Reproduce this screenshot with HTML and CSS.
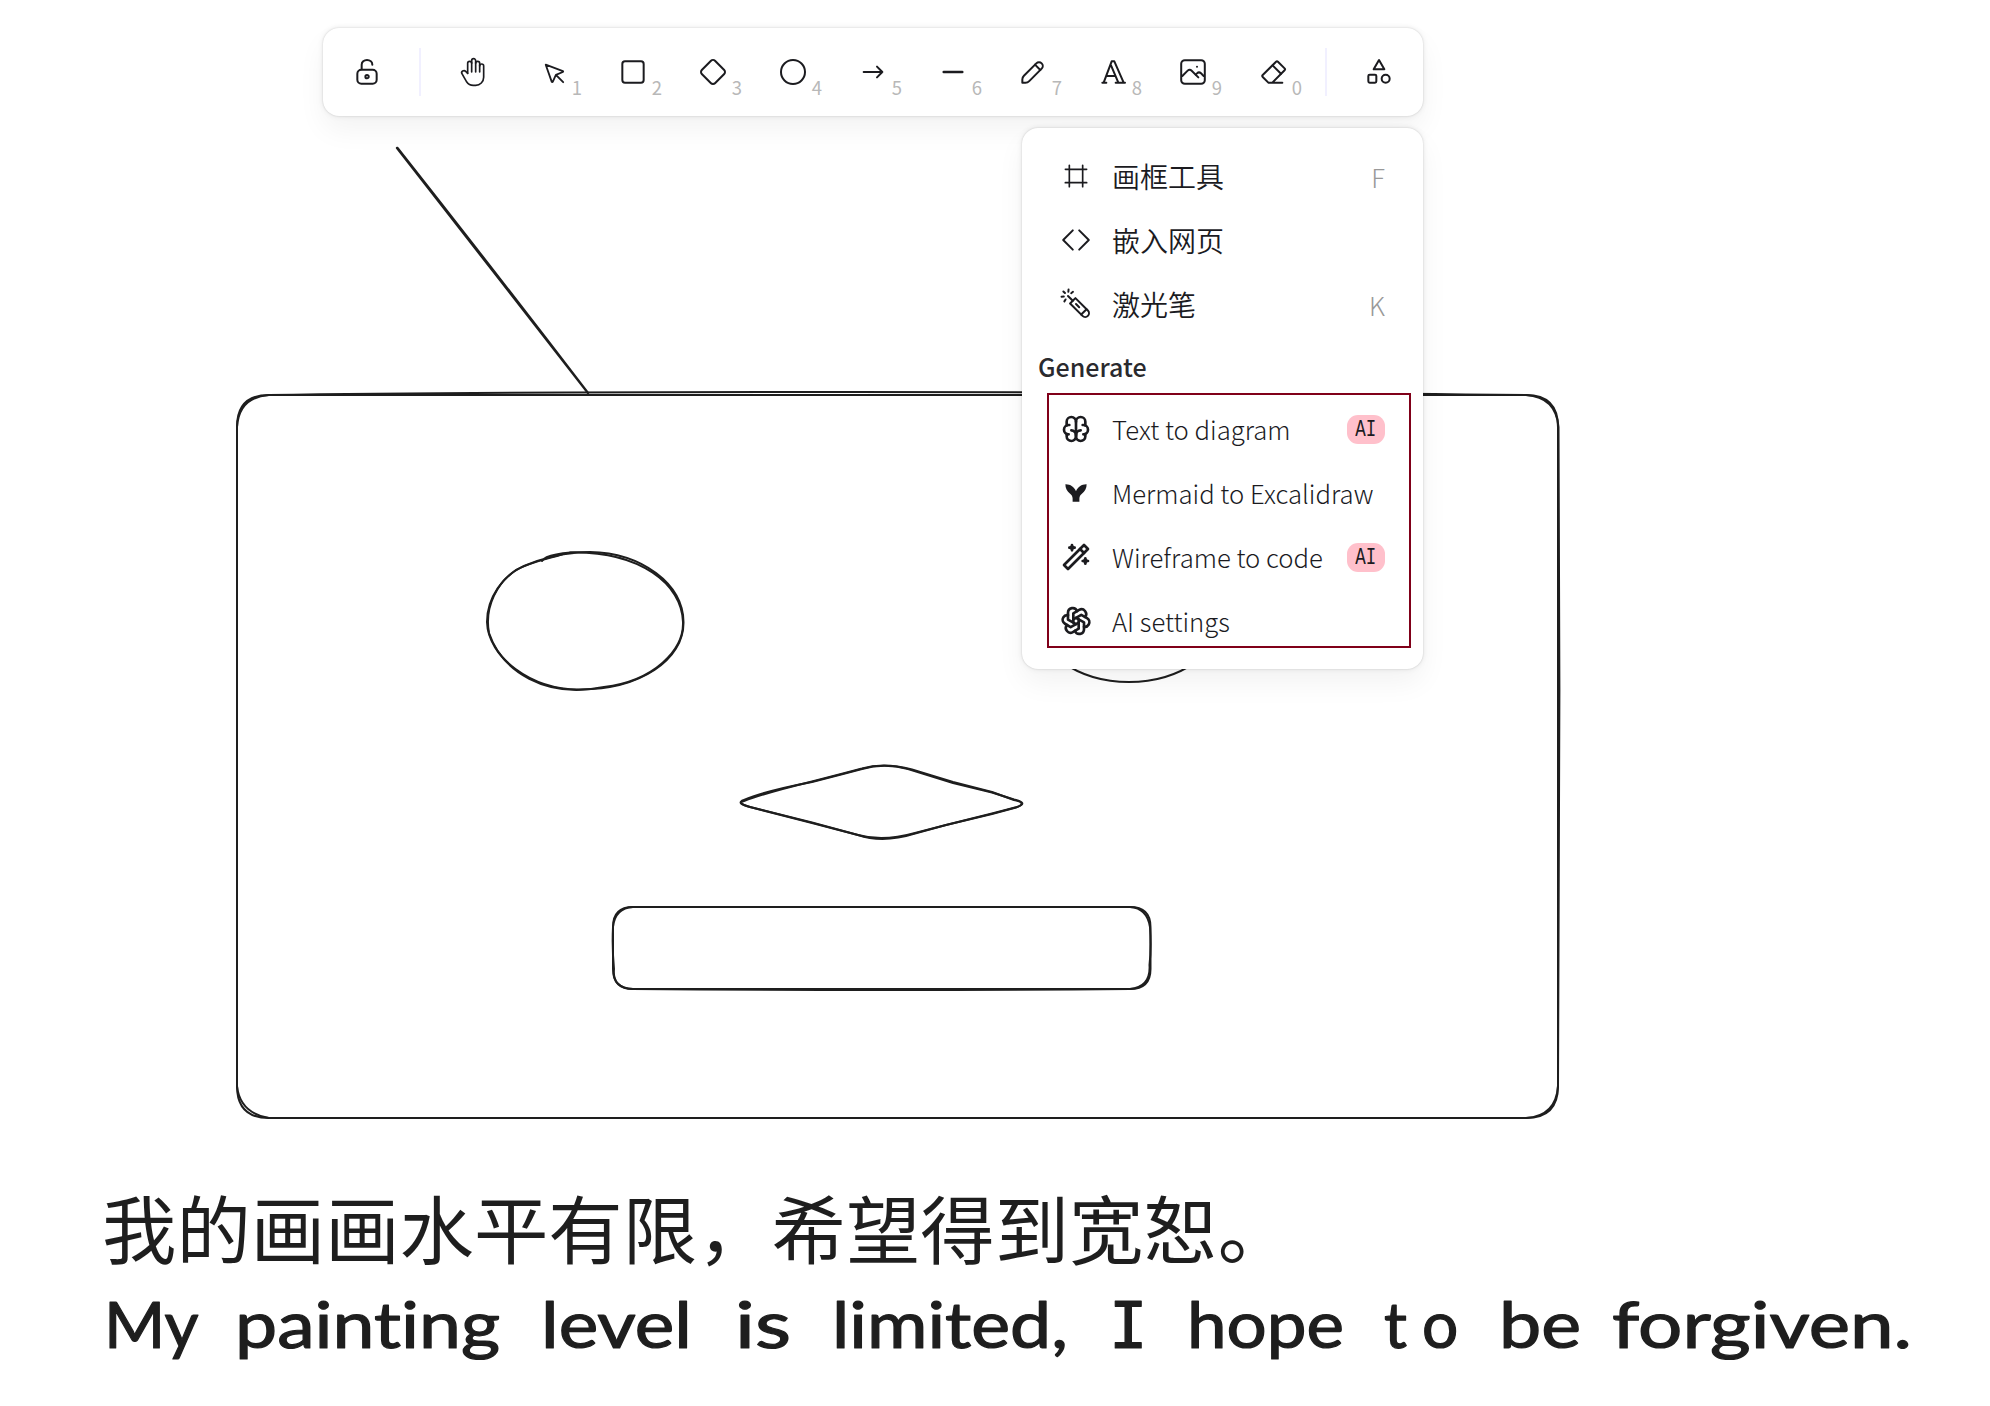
FILE: index.html
```html
<!DOCTYPE html>
<html lang="zh-CN">
<head>
<meta charset="utf-8">
<title>Excalidraw</title>
<link rel="stylesheet" href="styles.css">
</head>
<body>
<main class="board">
  <svg class="canvas" viewBox="0 0 1990 1406" aria-label="canvas">
    <g class="sketch">
      <path class="antenna" d="M397 148Q491 268 588 393M397.500 148Q493 269 588 393"/>
      <path d="M269 395H1526Q1558 395 1558 427V1086Q1558 1118 1526 1118H269Q237 1118 237 1086V427Q237 395 269 395"/>
      <path d="M269 395C520 391 1150 391 1526 395Q1556 397 1558.500 427C1560 640 1559.500 900 1558 1086Q1556 1116 1526 1118H269Q240 1113 237 1086V427Q239 397 269 395"/>
      <path d="M542 561C546 554 568 552 590 552C642 553 683 584 683.500 622C684 660 640 689.500 580 689.500C531 690 488 657 487 622C487 598 503 575 524 566C540 559 562 554 578 552.500"/>
      <path d="M570 552.500C640 551 682 584 683 622C684 650 654 681 604 687C545 699 502 671 489 633C484 606 498 582 516 570C530 562 548 559 563 554"/>
      <path d="M1034 613C1034 574 1077 544 1129 544S1224 574 1224 613S1180 682 1129 682S1034 652 1034 613Z"/>
      <path d="M744 800Q765 791 812 782L843 774L862 769Q884 762.500 908 769L953 783L992 792.500L1014 799.500Q1029 803 1017 807L992 813.500L946 825L915 833.500Q883 843.500 858 835L812 823L750 807Q735 803 744 800"/>
      <path d="M744 801Q765 793 812 781.500L843 773.500L862 768.500Q884 762 912 769.500L953 782L992 792L1014 800Q1028 803 1016 807.500L992 814L946 825L915 833Q883 842 858 835L812 822.500L750 807Q736 803 744 801"/>
      <path d="M633 907H1130Q1150.500 907 1150.500 927V969Q1150.500 989 1130 989H633Q613 989 613 969V927Q613 907 633 907"/>
      <path d="M633 907H1130Q1147 908 1150 927Q1151.500 948 1149.500 965Q1151 987 1130 989Q883 991 633 989Q612 988 614 969Q612 948 613 927Q615 908 633 907"/>
    </g>
    <text class="note note-zh" x="102" y="1258">我的画画水平有限，希望得到宽恕。</text>
    <text class="note note-en" y="1348"><tspan x="104" textLength="93" lengthAdjust="spacingAndGlyphs">My</tspan> <tspan x="235" textLength="265" lengthAdjust="spacingAndGlyphs">painting</tspan> <tspan x="541" textLength="151" lengthAdjust="spacingAndGlyphs">level</tspan> <tspan x="735" textLength="56" lengthAdjust="spacingAndGlyphs">is</tspan> <tspan x="832" textLength="236" lengthAdjust="spacingAndGlyphs">limited,</tspan> <tspan class="slab" x="1109">I</tspan> <tspan x="1187" textLength="157" lengthAdjust="spacingAndGlyphs">hope</tspan> <tspan x="1384 1422">to</tspan> <tspan x="1499" textLength="82" lengthAdjust="spacingAndGlyphs">be</tspan> <tspan x="1612" textLength="300" lengthAdjust="spacingAndGlyphs">forgiven.</tspan></text>
  </svg>

  <nav class="toolbar">
    <button class="tool"><svg class="icon thin" viewBox="0 0 20 20"><path d="M13.542 8.542H6.458a2.500 2.500 0 0 0-2.500 2.500v3.750a2.500 2.500 0 0 0 2.500 2.500h7.084a2.500 2.500 0 0 0 2.500-2.500v-3.750a2.500 2.500 0 0 0-2.500-2.500Z"/><path d="M10 13.958a1.042 1.042 0 1 0 0-2.083 1.042 1.042 0 0 0 0 2.083Z"/><path d="M6.667 8.333V5.417C6.667 3.806 8.159 2.500 10 2.500c1.841 0 3.333 1.306 3.333 2.917"/></svg></button>
    <span class="divider"></span>
    <button class="tool"><svg class="icon thin" viewBox="0 0 24 24"><path d="M8 13v-7.500a1.500 1.500 0 0 1 3 0v6.500"/><path d="M11 5.500v-2a1.500 1.500 0 1 1 3 0v8.500"/><path d="M14 5.500a1.500 1.500 0 0 1 3 0v6.500"/><path d="M17 7.500a1.500 1.500 0 0 1 3 0v8.500a6 6 0 0 1 -6 6h-2h.208a6 6 0 0 1 -5.012 -2.700a69.740 69.740 0 0 1 -.196 -.300c-.312 -.479 -1.407 -2.388 -3.286 -5.728a1.500 1.500 0 0 1 .536 -2.022a1.867 1.867 0 0 1 2.280 .280l1.470 1.470"/></svg></button>
    <button class="tool"><svg class="icon thin" viewBox="0 0 22 22"><path d="M6 6l4.153 11.793a.365 .365 0 0 0 .331 .207a.366 .366 0 0 0 .332 -.207l2.184 -4.793l4.787 -1.994a.355 .355 0 0 0 .213 -.323a.355 .355 0 0 0 -.213 -.323l-11.787 -4.360z"/><path d="M13.500 13.500l4.500 4.500"/></svg><span class="key">1</span></button>
    <button class="tool"><svg class="icon" viewBox="0 0 24 24"><rect x="4" y="4" width="16" height="16" rx="2"/></svg><span class="key">2</span></button>
    <button class="tool"><svg class="icon" viewBox="0 0 24 24"><path d="M10.500 20.400l-6.900 -6.900c-.781 -.781 -.781 -2.219 0 -3l6.900 -6.900c.781 -.781 2.219 -.781 3 0l6.900 6.900c.781 .781 .781 2.219 0 3l-6.900 6.900c-.781 .781 -2.219 .781 -3 0z"/></svg><span class="key">3</span></button>
    <button class="tool"><svg class="icon" viewBox="0 0 24 24"><circle cx="12" cy="12" r="9"/></svg><span class="key">4</span></button>
    <button class="tool"><svg class="icon" viewBox="0 0 24 24"><path d="M5 12h14M15 16l4-4M15 8l4 4"/></svg><span class="key">5</span></button>
    <button class="tool"><svg class="icon" viewBox="0 0 20 20"><path d="M4.167 10h11.666"/></svg><span class="key">6</span></button>
    <button class="tool"><svg class="icon thin" viewBox="0 0 20 20"><path d="m7.643 15.690 7.774-7.773a2.357 2.357 0 1 0-3.334-3.334L4.310 12.357a3.333 3.333 0 0 0-.977 2.357v1.953h1.953c.884 0 1.732-.352 2.357-.977Z"/><path d="m11.250 5.417 3.333 3.333"/></svg><span class="key">7</span></button>
    <button class="tool"><svg class="icon" viewBox="0 0 24 24"><path d="M4 20h3M14 20h7M6.900 15h6.900M10.200 6.300l5.800 13.700M5 20l6-16h2l7 16"/></svg><span class="key">8</span></button>
    <button class="tool"><svg class="icon thin" viewBox="0 0 20 20"><path d="M12.500 6.667h.01"/><path d="M4.910 2.625h10.180a2.284 2.284 0 0 1 2.285 2.284v10.182a2.284 2.284 0 0 1-2.284 2.284H4.909a2.284 2.284 0 0 1-2.284-2.284V4.909a2.284 2.284 0 0 1 2.284-2.284Z"/><path d="m3.333 12.500 3.334-3.333c.773-.745 1.726-.745 2.500 0l4.166 4.166"/><path d="m11.667 11.667.833-.834c.774-.744 1.726-.744 2.500 0l1.667 1.667"/></svg><span class="key">9</span></button>
    <button class="tool"><svg class="icon" viewBox="0 0 24 24"><path d="M19 20h-10.500l-4.210 -4.300a1 1 0 0 1 0 -1.410l10 -10a1 1 0 0 1 1.410 0l5 5a1 1 0 0 1 0 1.410l-9.200 9.300"/><path d="M18 13.300l-6.300 -6.300"/></svg><span class="key">0</span></button>
    <span class="divider"></span>
    <button class="tool"><svg class="icon" viewBox="0 0 24 24"><path d="M12 3l-4 7h8z"/><circle cx="17" cy="17" r="3"/><rect x="4" y="14" width="6" height="6" rx="1"/></svg></button>
  </nav>

  <section class="menu">
    <div class="item"><svg class="icon thin" viewBox="0 0 24 24"><path d="M4 7h16M4 17h16M7 4v16M17 4v16"/></svg><span class="label">画框工具</span><span class="shortcut">F</span></div>
    <div class="item"><svg class="icon thin" viewBox="0 0 20 20"><path d="M12 16l6-6-6-6M8 4l-6 6 6 6"/></svg><span class="label">嵌入网页</span></div>
    <div class="item"><svg class="icon thin" viewBox="0 0 20 20"><g transform="rotate(90 10 10)"><path d="m9.644 13.690 7.774-7.773a2.357 2.357 0 0 0-3.334-3.334l-7.773 7.774L8 12l1.643 1.690Z"/><path d="m13.250 3.417 3.333 3.333M10 10l2-2M5 15l3-3M2.156 17.894l1-1M5.453 19.029l-.144-1.407M2.377 11.887l.866 1.118M8.354 17.273l-1.194-.758M.953 14.652l1.408.130"/></g></svg><span class="label">激光笔</span><span class="shortcut">K</span></div>
    <h2 class="heading">Generate</h2>
    <div class="generate">
      <div class="item"><svg class="icon bold" viewBox="0 0 24 24"><path d="M15.500 13a3.500 3.500 0 0 0 -3.500 3.500v1a3.500 3.500 0 0 0 7 0v-1.800"/><path d="M8.500 13a3.500 3.500 0 0 1 3.500 3.500v1a3.500 3.500 0 0 1 -7 0v-1.800"/><path d="M17.500 16a3.500 3.500 0 0 0 0 -7h-.500"/><path d="M19 9.300v-2.800a3.500 3.500 0 0 0 -7 0"/><path d="M6.500 16a3.500 3.500 0 0 1 0 -7h.500"/><path d="M5 9.300v-2.800a3.500 3.500 0 0 1 7 0v10"/></svg><span class="label">Text to diagram</span><span class="badge"><span class="badge-text">AI</span></span></div>
      <div class="item"><svg class="icon solid" viewBox="0 0 490 490"><path d="M407.480,111.180C335.587,108.103 269.573,152.338 245.080,220C220.587,152.338 154.573,108.103 82.680,111.180C80.285,168.229 107.577,222.632 154.740,254.820C178.908,271.419 193.350,298.951 193.270,328.270L193.270,379.130L296.900,379.130L296.900,328.270C296.816,298.953 311.255,271.420 335.420,254.820C382.596,222.644 409.892,168.233 407.480,111.180Z"/></svg><span class="label">Mermaid to Excalidraw</span></div>
      <div class="item"><svg class="icon bold" viewBox="0 0 24 24"><path d="M6 21l15 -15l-3 -3l-15 15l3 3"/><path d="M15 6l3 3"/><path d="M9 3a2 2 0 0 0 2 2a2 2 0 0 0 -2 2a2 2 0 0 0 -2 -2a2 2 0 0 0 2 -2"/><path d="M19 13a2 2 0 0 0 2 2a2 2 0 0 0 -2 2a2 2 0 0 0 -2 -2a2 2 0 0 0 2 -2"/></svg><span class="label">Wireframe to code</span><span class="badge"><span class="badge-text">AI</span></span></div>
      <div class="item"><svg class="icon bold" viewBox="0 0 24 24"><path d="M11.217 19.384a3.501 3.501 0 0 0 6.783 -1.217v-5.167l-6 -3.350"/><path d="M5.214 15.014a3.501 3.501 0 0 0 4.446 5.266l4.340 -2.534v-6.946"/><path d="M6 7.630c-1.391 -.236 -2.787 .395 -3.534 1.689a3.474 3.474 0 0 0 1.271 4.745l4.263 2.514l6 -3.348"/><path d="M12.783 4.616a3.501 3.501 0 0 0 -6.783 1.217v5.067l6 3.450"/><path d="M18.786 8.986a3.501 3.501 0 0 0 -4.446 -5.266l-4.340 2.534v6.946"/><path d="M18 16.302c1.391 .236 2.787 -.395 3.534 -1.689a3.474 3.474 0 0 0 -1.271 -4.745l-4.308 -2.514l-5.955 3.420"/></svg><span class="label">AI settings</span></div>
    </div>
  </section>
</main>
</body>
</html>
```
FILE: styles.css
```css
* { box-sizing: border-box; }

body {
  margin: 0;
  background: #fff;
  color: #1b1b1f;
  font-family: "Noto Sans CJK SC", "Noto Sans", sans-serif;
}

.board {
  position: relative;
  height: 1406px;
  padding-top: 28px;
  overflow: hidden;
}

.canvas {
  position: absolute;
  inset: 0;
  width: 1990px;
  height: 1406px;
}

.sketch {
  fill: none;
  stroke: #1e1e1e;
  stroke-width: 2;
  stroke-linecap: round;
  stroke-linejoin: round;
}
.antenna { stroke-width: 2.3; }

.note { fill: #1e1e1e; }
.note-zh { font-size: 74.4px; font-weight: 400; }
.note-en {
  font-family: Lato, sans-serif;
  font-size: 64px;
  font-variant-ligatures: none;
  stroke: #1e1e1e;
  stroke-width: 1.2;
  stroke-linejoin: round;
}
.slab { font-family: "DejaVu Sans Mono", monospace; }

.toolbar, .menu {
  position: relative;
  background: #fff;
  border-radius: 16px;
  box-shadow: 0 0 2px rgba(0, 0, 0, .17), 0 0 6px rgba(0, 0, 0, .08), 0 14px 28px rgba(0, 0, 0, .05);
}

.toolbar {
  display: flex;
  align-items: center;
  gap: 8px;
  width: 1100px;
  height: 88px;
  margin-left: 323px;
  padding: 8px;
}

.tool {
  position: relative;
  display: flex;
  align-items: center;
  justify-content: center;
  flex: none;
  width: 72px;
  height: 72px;
  padding: 0;
  border: 0;
  background: none;
  color: inherit;
  font: inherit;
}

.divider {
  width: 2px;
  height: 48px;
  margin: 0 8px;
  background: #f1f0ff;
}

.key {
  position: absolute;
  right: 7px;
  bottom: 9px;
  color: #b8b8b8;
  font-size: 18.5px;
  line-height: 24px;
}

.icon {
  flex: none;
  width: 32px;
  height: 32px;
  fill: none;
  stroke: currentColor;
  stroke-width: 1.5;
  stroke-linecap: round;
  stroke-linejoin: round;
  overflow: visible;
}
.thin { stroke-width: 1.25; }
.bold { stroke-width: 2; }
.solid { fill: currentColor; stroke: none; }

.menu {
  width: 401px;
  margin: 12px 0 0 1022px;
  padding: 16px;
}

.item {
  display: flex;
  align-items: center;
  gap: 20px;
  height: 64px;
  padding: 0 22px;
}

.label {
  flex: 1;
  font-size: 28px;
  font-weight: 350;
  line-height: 40px;
  white-space: nowrap;
}
.generate .label { font-size: 25.7px; font-weight: 300; }

.shortcut { color: #999; font-size: 25.7px; font-weight: 300; }

.heading {
  height: 61px;
  margin: 0;
  color: #2a2a2e;
  font-size: 25px;
  font-weight: 500;
  line-height: 61px;
}

.generate { position: relative; }
.generate::after {
  content: "";
  position: absolute;
  inset: -4px -4px 5px 9px;
  border: 2px solid #800019;
}

.badge {
  display: flex;
  align-items: center;
  justify-content: center;
  width: 38px;
  height: 29px;
  border-radius: 11px;
  background: #ffc0cb;
}
.badge-text {
  padding-top: 2px;
  font: 23px/27px "Liberation Mono", monospace;
  transform: scaleX(.76);
}
```
